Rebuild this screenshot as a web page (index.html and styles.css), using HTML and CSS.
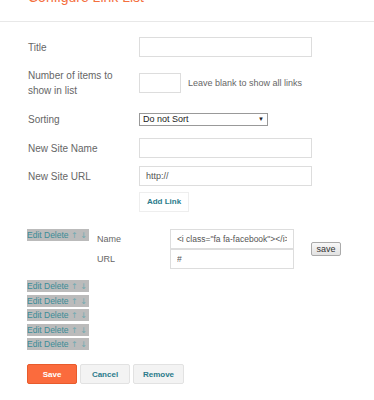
FILE: index.html
```html
<!DOCTYPE html>
<html lang="en">
<head>
    <meta charset="UTF-8">
    <title>Configure Link List</title>
    <link rel="stylesheet" href="styles.css">
</head>
<body>
<div class="page-head">
    <h1>Configure Link List</h1>
</div>
<div class="form">
    <label class="label" for="title">Title</label>
    <div><input type="text" id="title" class="field"></div>

    <label class="label" for="count">Number of items to<br>show in list</label>
    <div class="inline">
        <input type="text" id="count" class="field field-short">
        <span class="hint">Leave blank to show all links</span>
    </div>

    <label class="label" for="sorting">Sorting</label>
    <div class="select-wrap">
        <select id="sorting" class="select">
            <option>Do not Sort</option>
            <option>Alphabetically</option>
            <option>Reverse Alphabetically</option>
        </select>
        <span class="select-arrow">&#9660;</span>
    </div>

    <label class="label" for="siteName">New Site Name</label>
    <div><input type="text" id="siteName" class="field"></div>

    <label class="label" for="siteUrl">New Site URL</label>
    <div><input type="text" id="siteUrl" class="field" value="http://"></div>

    <div class="add-cell"><button class="btn-add">Add Link</button></div>
</div>

<div class="links">
    <div class="edit-item">
        <span class="tools">Edit Delete <span class="arrows">&uarr; &darr;</span></span>
        <div class="fields">
            <span class="label">Name</span>
            <input type="text" class="field field-mid" value='<i class="fa fa-facebook"></i>'>
            <span class="label">URL</span>
            <input type="text" class="field field-mid" value="#">
        </div>
        <button class="btn-small">save</button>
    </div>
    <div class="link-list">
        <span class="tools">Edit Delete <span class="arrows">&uarr; &darr;</span></span>
        <span class="tools">Edit Delete <span class="arrows">&uarr; &darr;</span></span>
        <span class="tools">Edit Delete <span class="arrows">&uarr; &darr;</span></span>
        <span class="tools">Edit Delete <span class="arrows">&uarr; &darr;</span></span>
        <span class="tools">Edit Delete <span class="arrows">&uarr; &darr;</span></span>
    </div>
</div>

<div class="actions">
    <button class="btn btn-primary">Save</button>
    <button class="btn">Cancel</button>
    <button class="btn">Remove</button>
</div>
</body>
</html>
```

FILE: styles.css
```css
body {
    margin: 0;
    font-family: "Liberation Sans", Arial, sans-serif;
    color: #666;
    background: #fff;
}
.page-head {
    margin-top: -11px;
    padding: 0 28px 16px;
    border-bottom: 1px solid #e8e8e8;
}
.page-head h1 {
    margin: 0;
    font-size: 14px;
    line-height: 16px;
    font-weight: normal;
    color: #f4703f;
}
.form {
    display: grid;
    grid-template-columns: 111px auto;
    grid-template-rows: 30px 41px 32px 26px 30px 20px;
    align-items: center;
    margin-top: 10px;
    padding-left: 28px;
}
.label {
    font-size: 10px;
    line-height: 15px;
    color: #666;
}
.field {
    display: block;
    box-sizing: border-box;
    width: 173px;
    height: 20px;
    padding: 0 6px;
    border: 1px solid #ddd;
    font-family: inherit;
    font-size: 9px;
    color: #555;
    outline: none;
}
.field-short {
    width: 42px;
}
.field-mid {
    width: 124px;
    font-size: 8.5px;
}
.inline {
    display: flex;
    align-items: center;
}
.hint {
    margin-left: 7px;
    font-size: 9px;
    color: #666;
}
.select-wrap {
    position: relative;
    width: 129px;
    height: 13px;
}
.select {
    appearance: none;
    -webkit-appearance: none;
    display: block;
    box-sizing: border-box;
    width: 129px;
    height: 13px;
    padding: 0 3px;
    border: 1px solid #999;
    border-radius: 0;
    background: #fff;
    font-family: inherit;
    font-size: 9px;
    line-height: 11px;
    color: #222;
}
.select-arrow {
    position: absolute;
    right: 4px;
    top: 3px;
    font-size: 6px;
    line-height: 7px;
    color: #222;
    pointer-events: none;
}
.add-cell {
    grid-column: 2;
}
.btn-add {
    box-sizing: border-box;
    width: 50px;
    height: 20px;
    padding: 0;
    border: 1px solid #eee;
    background: #fff;
    font-family: inherit;
    font-size: 8px;
    font-weight: bold;
    color: #2b7b8b;
}
.links {
    margin-top: 18px;
    padding-left: 27px;
}
.edit-item {
    display: flex;
    align-items: flex-start;
}
.tools {
    display: block;
    width: fit-content;
    height: 12px;
    padding-right: 2px;
    line-height: 12px;
    background: #bbb;
    font-size: 8.5px;
    color: #3a8c97;
    white-space: nowrap;
}
.arrows {
    font-family: "DejaVu Sans", sans-serif;
    font-size: 8px;
    color: #6fa9b0;
}
.fields {
    display: grid;
    grid-template-columns: 73px 124px;
    grid-auto-rows: 20px;
    align-items: center;
    margin-left: 8px;
}
.fields .label {
    font-size: 9px;
}
.btn-small {
    align-self: center;
    box-sizing: border-box;
    width: 30px;
    height: 14px;
    margin-left: 17px;
    padding: 0;
    border: 1px solid #aaa;
    border-radius: 2px;
    background: linear-gradient(#f8f8f8, #e2e2e2);
    font-family: inherit;
    font-size: 9px;
    color: #333;
}
.link-list {
    display: flex;
    flex-direction: column;
    gap: 2.5px;
    margin-top: 11px;
}
.actions {
    display: flex;
    gap: 3px;
    margin-top: 14px;
    padding-left: 27px;
}
.btn {
    box-sizing: border-box;
    width: 50px;
    height: 20px;
    padding: 0;
    border: 1px solid #e2e2e2;
    border-radius: 2px;
    background: #f3f3f3;
    font-family: inherit;
    font-size: 8px;
    font-weight: bold;
    color: #2b7b8b;
}
.btn:last-child {
    width: 51px;
}
.btn-primary {
    border-color: #e85b2c;
    background: #fb6b3d;
    color: #fff;
}
```
